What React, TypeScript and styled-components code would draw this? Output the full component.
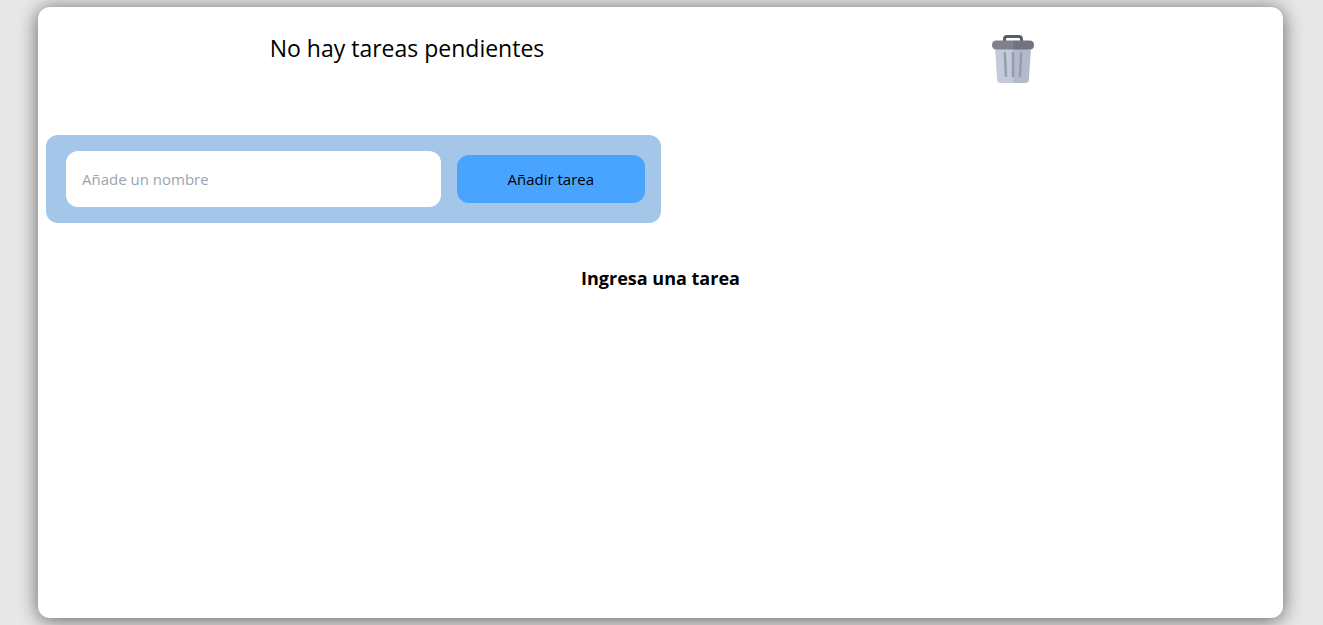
import { useState } from "react";
import styled, { createGlobalStyle } from "styled-components";

const GlobalStyle = createGlobalStyle`
  *, *::before, *::after { box-sizing: border-box; }
  body {
    margin: 0;
    background: #e8e8e8;
    color: #000;
    font-family: "Segoe UI", "Open Sans", "Noto Sans", sans-serif;
    font-size: 15px;
    line-height: 24px;
  }
  h1, h2 { margin: 0; }
`;

const Page = styled.div`
  display: flex;
  min-height: 100vh;
  padding: 7px 40px 7px 38px;
`;

const Card = styled.main`
  flex: 1;
  padding: 8px;
  border-radius: 12px;
  background: #fff;
  box-shadow: 0 2px 20px rgba(0, 0, 0, 0.6);
`;

const Header = styled.header`
  display: grid;
  grid-template-columns: 722fr 490fr;
  justify-items: center;
  align-items: start;
  min-height: 120px;
  padding: 16px 17px 0 0;
`;

const Title = styled.h1`
  font-size: 23px;
  font-weight: 400;
  line-height: 34px;
`;

const TrashButton = styled.button`
  display: flex;
  padding: 4px 0 0;
  border: 0;
  background: none;
  cursor: pointer;
`;

const TaskForm = styled.form`
  display: grid;
  grid-template-columns: 2fr 1fr;
  align-items: center;
  gap: 16px;
  width: 50%;
  padding: 16px 16px 16px 20px;
  border-radius: 12px;
  background: #a3c6e9;
`;

const TaskInput = styled.input`
  min-width: 0;
  height: 56px;
  padding: 0 16px;
  border: 0;
  border-radius: 12px;
  background: #fff;
  font: inherit;
  &::placeholder { color: #9ca3af; opacity: 1; }
`;

const SubmitButton = styled.button`
  height: 48px;
  padding: 0 16px;
  border: 0;
  border-radius: 12px;
  background: #48a4ff;
  color: #000;
  font: inherit;
  cursor: pointer;
`;

const EmptyMessage = styled.h2`
  margin-top: 40px;
  font-size: 18px;
  font-weight: 700;
  line-height: 30px;
  text-align: center;
`;

function TrashIcon() {
  return (
    <svg width="48" height="48" viewBox="0 0 48 48" aria-hidden="true">
      <path d="M15.500 7V4.200Q15.500 1.500 18.200 1.500h11.600q2.700 0 2.700 2.700V7" fill="none" stroke="#5b5d65" strokeWidth="3" />
      <path d="M6 12h18v36H11.600q-3.200 0-3.500-3.200z" fill="#c3cada" />
      <path d="M24 12h18l-2.100 32.800q-.3 3.200-3.500 3.200H24z" fill="#b3bacb" />
      <path d="M24 5.500H7.500Q3 5.500 3 10t4.500 4.500H24z" fill="#7f828b" />
      <path d="M24 5.500h16.500Q45 5.500 45 10t-4.500 4.500H24z" fill="#71747e" />
      <path d="M15.800 18l1.200 23M24 18v23M32.200 18L31 41" fill="none" stroke="#969daf" strokeWidth="2.500" strokeLinecap="round" />
    </svg>
  );
}

export default function App() {
  const [name, setName] = useState("");

  return (
    <>
      <GlobalStyle />
      <Page>
        <Card>
          <Header>
            <Title>No hay tareas pendientes</Title>
            <TrashButton type="button" aria-label="Eliminar tareas">
              <TrashIcon />
            </TrashButton>
          </Header>
          <TaskForm onSubmit={(event) => event.preventDefault()}>
            <TaskInput
              type="text"
              aria-label="Nombre de la tarea"
              placeholder="Añade un nombre"
              value={name}
              onChange={(event) => setName(event.target.value)}
            />
            <SubmitButton type="submit">Añadir tarea</SubmitButton>
          </TaskForm>
          <EmptyMessage>Ingresa una tarea</EmptyMessage>
        </Card>
      </Page>
    </>
  );
}
